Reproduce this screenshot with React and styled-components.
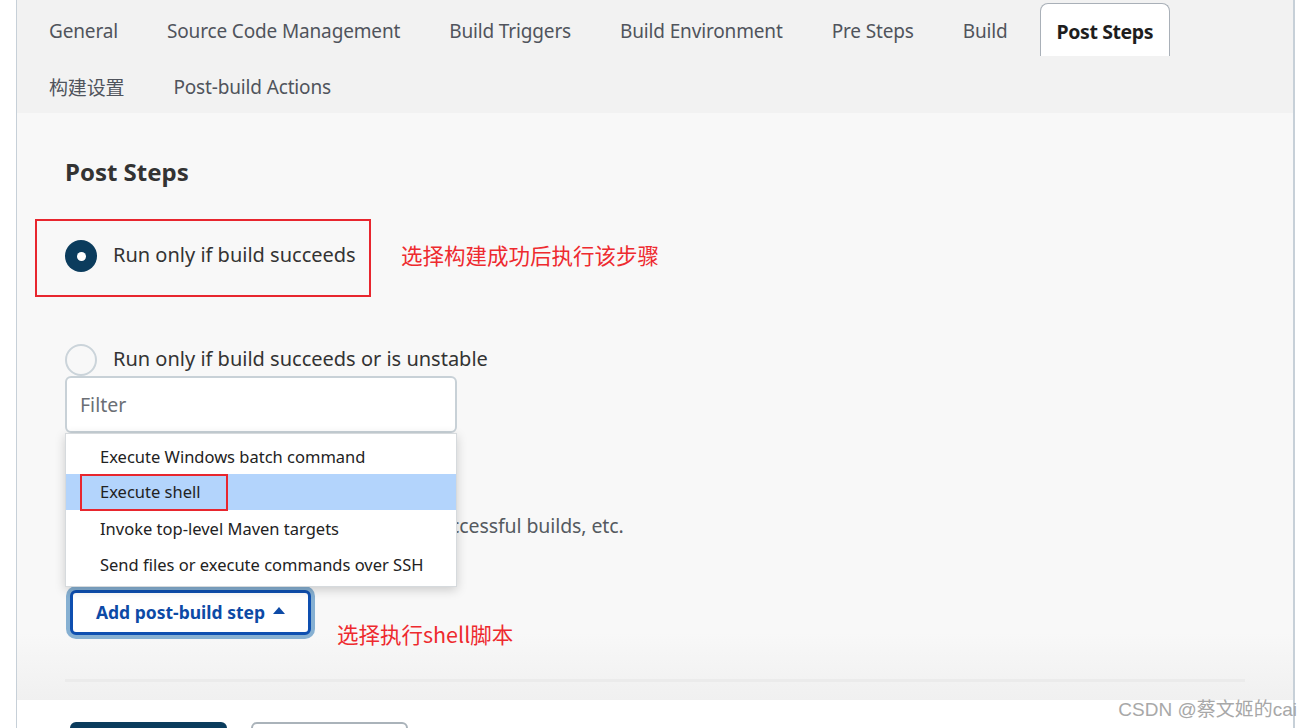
import React from "react";
import styled, { createGlobalStyle } from "styled-components";

const Global = createGlobalStyle`
  html, body { margin: 0; padding: 0; background: #ffffff; }
  body { font-family: "Noto Sans", "Noto Sans CJK SC", sans-serif; overflow: hidden; }
  * { box-sizing: border-box; }
`;

const Page = styled.div`
  position: relative;
  width: 1311px;
  height: 728px;
  overflow: hidden;
  background: #fff;
`;

const Frame = styled.div`
  margin-left: 16px;
  width: 1279px;
  height: 728px;
  border-left: 1px solid #c7d0d8;
  border-right: 2px solid #c7d0d8;
  display: flex;
  flex-direction: column;
`;

const TabBar = styled.div`
  flex: none;
  background: #f2f2f2;
  height: 113px;
  padding: 3px 0 0 15px;
  display: flex;
  flex-wrap: wrap;
  align-content: flex-start;
  row-gap: 3px;
  column-gap: 15px;
`;

const Tab = styled.div`
  height: 53px;
  padding: ${(p) => (p.$active ? "2px 16px 0" : "2px 16px 0")};
  display: flex;
  align-items: center;
  font-size: ${(p) => (p.$active ? "19.5px" : "19px")};
  color: ${(p) => (p.$active ? "#1e1e1e" : "#50545c")};
  font-weight: ${(p) => (p.$active ? 700 : 400)};
  background: ${(p) => (p.$active ? "#ffffff" : "transparent")};
  border: 1px solid ${(p) => (p.$active ? "#a9b0b8" : "transparent")};
  border-bottom: none;
  border-radius: 8px 8px 0 0;
  font-family: "Noto Sans", "Noto Sans CJK SC", sans-serif;
  white-space: nowrap;
  letter-spacing: ${(p) => (p.$active ? "-0.4px" : "-0.15px")};
`;

const Content = styled.div`
  flex: none;
  background: linear-gradient(#f8f8f8 0, #f8f8f8 520px, #f0f0f0 587px);
  height: 587px;
  padding: 43px 48px 0 48px;
  display: flex;
  flex-direction: column;
`;

const Heading = styled.h2`
  margin: 0;
  font-size: 24px;
  line-height: 32px;
  font-weight: 700;
  color: #333;
`;

const AnnotRow = styled.div`
  display: flex;
  align-items: center;
  margin-top: 31px;
`;

const AnnotBox = styled.div`
  margin-left: -30px;
  width: 336px;
  height: 78px;
  border: 2px solid #e8262e;
  padding-left: 28px;
  padding-bottom: 4px;
  display: flex;
  align-items: center;
`;

const Note = styled.span`
  color: #ee2a2f;
  font-size: 21.5px;
  font-family: "Noto Sans CJK SC", sans-serif;
  margin-left: ${(p) => p.$ml || 30}px;
  margin-top: ${(p) => p.$mt || 0}px;
  white-space: nowrap;
`;

const RadioRow = styled.div`
  display: flex;
  align-items: center;
  gap: 16px;
  height: 32px;
  margin-top: ${(p) => p.$mt || 0}px;
`;

const Radio = styled.span`
  width: 32px;
  height: 32px;
  border-radius: 50%;
  flex: none;
  background: ${(p) => (p.$checked ? "#0b3c5d" : "#f8f8f8")};
  border: ${(p) => (p.$checked ? "none" : "2px solid #cbd4da")};
  display: flex;
  align-items: center;
  justify-content: center;
  &::after {
    content: "";
    display: ${(p) => (p.$checked ? "block" : "none")};
    width: 9px;
    height: 9px;
    border-radius: 50%;
    background: #fff;
  }
`;

const RadioLabel = styled.span`
  font-size: 20px;
  line-height: 28px;
  padding-bottom: 3px;
  color: #333;
  white-space: nowrap;
`;

const Help = styled.div`
  font-size: 19.5px;
  line-height: 28px;
  color: #555a60;
  margin-top: 80px;
  white-space: nowrap;
  letter-spacing: -0.1px;
`;

const ButtonRow = styled.div`
  display: flex;
  align-items: flex-start;
  margin-top: 50px;
`;

const MenuAnchor = styled.div`
  position: relative;
  margin-left: 5px;
`;

const AddButton = styled.button`
  height: 45px;
  width: 241px;
  border: 3px solid #0e4fb0;
  border-radius: 6px;
  background: #fff;
  box-shadow: 0 0 0 4px #86b0d2;
  color: #0d4aa6;
  font-family: "Noto Sans", sans-serif;
  font-size: 17.5px;
  font-weight: 700;
  display: flex;
  align-items: center;
  justify-content: center;
  gap: 8px;
  padding: 0 0 2px 0;
`;

const Caret = styled.span`
  width: 0;
  height: 0;
  border-left: 6px solid transparent;
  border-right: 6px solid transparent;
  border-bottom: 7px solid #0d4aa6;
  margin-top: -2px;
`;

const Menu = styled.div`
  position: absolute;
  left: -5px;
  bottom: calc(100% + 3px);
  width: 392px;
  display: flex;
  flex-direction: column;
`;

const FilterInput = styled.input`
  height: 57px;
  border: 2px solid #c8d1d7;
  border-radius: 6px;
  background: #fff;
  padding: 0 13px;
  font-family: "Noto Sans", sans-serif;
  font-size: 19.5px;
  color: #333;
  outline: none;
  &::placeholder { color: #6b6f75; }
`;

const List = styled.div`
  background: #fff;
  border: 1px solid #d6dadd;
  box-shadow: 0 3px 10px rgba(0, 0, 0, 0.18);
  padding: 4px 0;
  height: 154px;
`;

const Item = styled.div`
  height: 36px;
  display: flex;
  align-items: center;
  padding-left: 34px;
  font-size: 16.5px;
  color: #222;
  background: ${(p) => (p.$hl ? "#b3d4fc" : "#fff")};
  white-space: nowrap;
`;

const Boxed = styled.span`
  border: 2px solid #e8262e;
  height: 37px;
  margin-left: -20px;
  padding: 0 26px 2px 18px;
  display: flex;
  align-items: center;
`;

const Separator = styled.div`
  height: 3px;
  background: #ebebeb;
  margin-top: 30px;
  width: 1180px;
`;

const Footer = styled.div`
  flex: none;
  height: 28px;
  background: #fff;
  padding: 22px 0 0 53px;
  display: flex;
  gap: 24px;
  overflow: hidden;
`;

const FootButton = styled.div`
  flex: none;
  width: 157px;
  height: 40px;
  border-radius: 6px;
  background: ${(p) => (p.$primary ? "#0b3c5d" : "#fff")};
  border: 2px solid ${(p) => (p.$primary ? "#0b3c5d" : "#aab3ba")};
`;

const Watermark = styled.div`
  position: absolute;
  right: 14px;
  bottom: 7px;
  font-family: "Liberation Sans", "Noto Sans CJK SC", sans-serif;
  font-size: 19px;
  color: #a8a8a8;
  white-space: nowrap;
`;

const tabs = [
  "General",
  "Source Code Management",
  "Build Triggers",
  "Build Environment",
  "Pre Steps",
  "Build",
  "Post Steps",
  "构建设置",
  "Post-build Actions",
];

const items = [
  "Execute Windows batch command",
  "Execute shell",
  "Invoke top-level Maven targets",
  "Send files or execute commands over SSH",
];

export default function App() {
  return (
    <Page>
      <Global />
      <Frame>
        <TabBar>
          {tabs.map((t) => (
            <Tab key={t} $active={t === "Post Steps"}>
              {t}
            </Tab>
          ))}
        </TabBar>
        <Content>
          <Heading>Post Steps</Heading>
          <AnnotRow>
            <AnnotBox>
              <RadioRow>
                <Radio $checked />
                <RadioLabel>Run only if build succeeds</RadioLabel>
              </RadioRow>
            </AnnotBox>
            <Note $mt={-8}>选择构建成功后执行该步骤</Note>
          </AnnotRow>
          <RadioRow $mt={47}>
            <Radio />
            <RadioLabel>Run only if build succeeds or is unstable</RadioLabel>
          </RadioRow>
          <RadioRow $mt={24}>
            <Radio />
            <RadioLabel>Run regardless of build result</RadioLabel>
          </RadioRow>
          <Help>Should the post-build steps run only for successful builds, etc.</Help>
          <ButtonRow>
            <MenuAnchor>
              <Menu>
                <FilterInput placeholder="Filter" readOnly />
                <List>
                  {items.map((it) => (
                    <Item key={it} $hl={it === "Execute shell"}>
                      {it === "Execute shell" ? <Boxed>{it}</Boxed> : it}
                    </Item>
                  ))}
                </List>
              </Menu>
              <AddButton>
                Add post-build step <Caret />
              </AddButton>
            </MenuAnchor>
            <Note $ml={26} $mt={28}>选择执行shell脚本</Note>
          </ButtonRow>
          <Separator />
        </Content>
        <Footer>
          <FootButton $primary />
          <FootButton />
        </Footer>
      </Frame>
      <Watermark>CSDN @蔡文姬的cai</Watermark>
    </Page>
  );
}
